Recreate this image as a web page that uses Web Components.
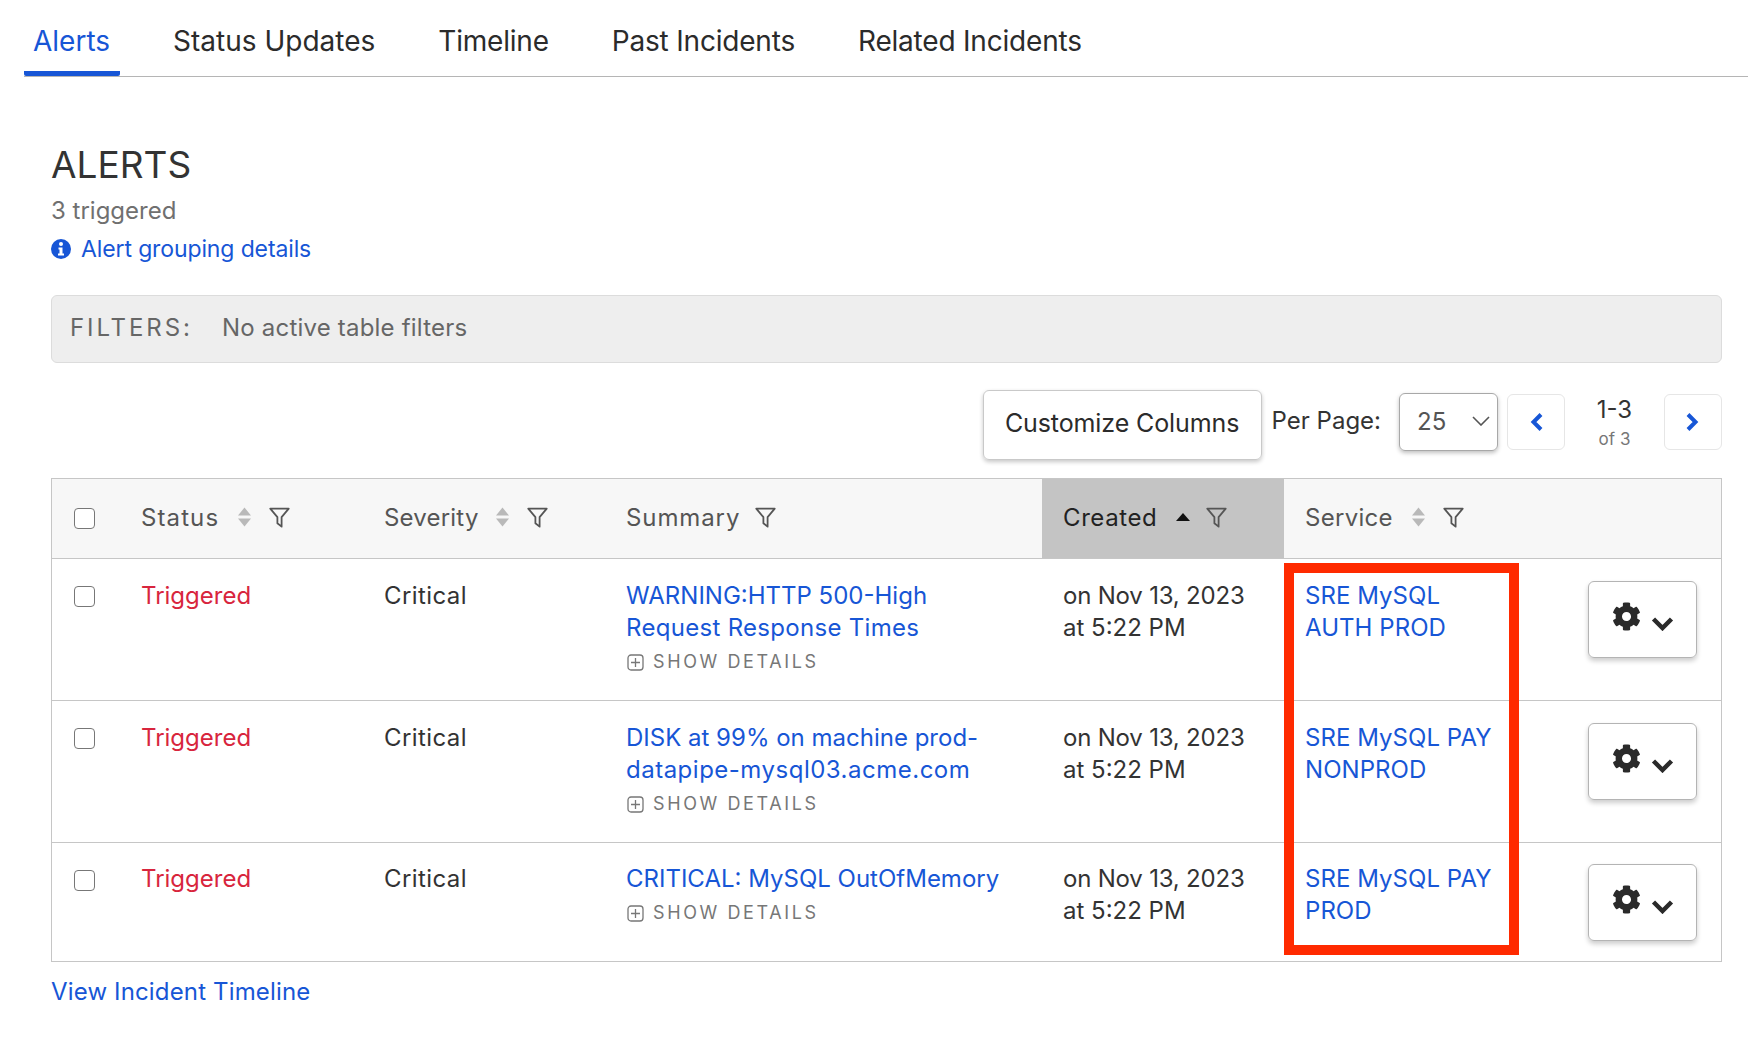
<!DOCTYPE html>
<html>
<head>
<meta charset="utf-8">
<title>Alerts</title>
<style>
  html, body { margin: 0; background: #fff; }
  body { font-family: Inter, "Noto Sans", sans-serif; color: #333; width: 1758px; height: 1038px; overflow: hidden; }
</style>
</head>
<body>
<incident-tabs></incident-tabs>
<alerts-panel></alerts-panel>

<script>
const BLUE = "#1756d6";
const FUNNEL = `<svg width="21" height="21" viewBox="0 0 20 20"><path d="M1.2 1.5h17.6l-6.8 8.2v9l-4-3.2v-5.800z" fill="none" stroke="currentColor" stroke-width="1.700" stroke-linejoin="round"/></svg>`;
const SORT = `<svg width="15" height="20" viewBox="0 0 15 20"><path d="M7.500 0.500l6.500 8h-13zM7.500 19.500l6.500-8h-13z" fill="#b9b9b9"/></svg>`;
const GEAR = `<svg width="29" height="29" viewBox="0 0 512 512"><path fill="#2a2a2a" d="M487.400 315.700l-42.600-24.600c4.300-23.200 4.300-47 0-70.200l42.600-24.600c4.900-2.800 7.100-8.600 5.500-14-11.100-35.600-30-67.800-54.700-94.600-3.800-4.100-10-5.100-14.800-2.300L380.800 110c-17.900-15.400-38.500-27.300-60.800-35.100V25.800c0-5.600-3.900-10.500-9.400-11.700-36.700-8.200-74.300-7.800-109.200 0-5.500 1.200-9.400 6.100-9.400 11.700V75c-22.200 7.900-42.800 19.800-60.800 35.100L88.700 85.500c-4.900-2.800-11-1.900-14.800 2.300-24.700 26.700-43.600 58.900-54.700 94.600-1.700 5.400.6 11.200 5.500 14L67.300 221c-4.300 23.200-4.300 47 0 70.200l-42.600 24.600c-4.900 2.800-7.100 8.600-5.500 14 11.100 35.600 30 67.800 54.700 94.600 3.800 4.100 10 5.100 14.800 2.300l42.600-24.600c17.900 15.400 38.500 27.300 60.800 35.100v49.200c0 5.600 3.900 10.500 9.400 11.700 36.700 8.200 74.300 7.800 109.200 0 5.500-1.200 9.400-6.100 9.400-11.700v-49.200c22.200-7.900 42.800-19.800 60.800-35.100l42.600 24.600c4.900 2.800 11 1.900 14.800-2.300 24.700-26.700 43.600-58.900 54.700-94.600 1.500-5.500-.7-11.300-5.600-14.100zM256 336c-44.100 0-80-35.900-80-80s35.900-80 80-80 80 35.900 80 80-35.900 80-80 80z"/></svg>`;

class IncidentTabs extends HTMLElement {
  constructor() {
    super();
    this.attachShadow({ mode: "open" });
    const tabs = ["Alerts", "Status Updates", "Timeline", "Past Incidents", "Related Incidents"];
    this.shadowRoot.innerHTML = `<style>
      :host { display: flex; gap: 43px; margin-left: 24px; width: 1724px; height: 77px; box-sizing: border-box; border-bottom: 1px solid #b5b5b5; font-size: 28px; letter-spacing: -.2px; color: #2b2b2b; }
      div { padding: 0 10px; height: 76px; line-height: 82px; box-sizing: border-box; white-space: nowrap; }
      div:nth-of-type(2) { letter-spacing: 0; }
      .on { padding-left: 9px; color: ${BLUE}; letter-spacing: 0; border-bottom: 5px solid ${BLUE}; border-radius: 0 0 2px 2px; }
    </style>` + tabs.map((t, i) => `<div class="${i === 0 ? "on" : ""}">${t}</div>`).join("");
  }
}

class FilterBar extends HTMLElement {
  constructor() {
    super();
    this.attachShadow({ mode: "open" });
    this.shadowRoot.innerHTML = `<style>
      :host { display: flex; align-items: center; height: 68px; box-sizing: border-box; padding-left: 18px; padding-bottom: 4px; background: #eeeeee; border: 1px solid #dcdcdc; border-radius: 6px; color: #666; font-size: 24px; }
      b { font-weight: 400; letter-spacing: 2.900px; width: 152px; }
      span { letter-spacing: .2px; }
    </style><b>FILTERS:</b><span>No active table filters</span>`;
  }
}

class TableToolbar extends HTMLElement {
  constructor() {
    super();
    this.attachShadow({ mode: "open" });
    this.shadowRoot.innerHTML = `<style>
      :host { display: flex; align-items: center; justify-content: flex-end; height: 70px; font-size: 24px; color: #333; }
      .cust { width: 279px; height: 70px; box-sizing: border-box; padding-bottom: 4px; border: 1px solid #c9c9c9; border-radius: 6px; box-shadow: 0 2px 4px rgba(0,0,0,.22); display: flex; align-items: center; justify-content: center; color: #2b2b2b; font-size: 25px; letter-spacing: -.1px; }
      .per { margin-left: 10px; margin-right: 18px; position: relative; top: -5px; }
      .sel { width: 99px; height: 58px; box-sizing: border-box; border: 1px solid #a8a8a8; border-radius: 6px; box-shadow: 0 2px 4px rgba(0,0,0,.25); display: flex; align-items: center; justify-content: space-between; padding: 0 7px 2px 17px; color: #555; position: relative; top: -3px; }
      .pg { width: 58px; height: 56px; box-sizing: border-box; border: 1px solid #e6e6e6; border-radius: 6px; display: flex; align-items: center; justify-content: center; position: relative; top: -3px; }
      .prev { margin-left: 9px; }
      .range { width: 99px; text-align: center; line-height: 1; position: relative; top: -2px; }
      .range small { display: block; font-size: 17px; color: #777; margin-top: 9px; }
    </style>
    <div class="cust">Customize Columns</div>
    <span class="per">Per Page:</span>
    <div class="sel"><span>25</span><svg width="18" height="10" viewBox="0 0 18 10"><path d="M1 1l8 8 8-8" fill="none" stroke="#555" stroke-width="1.600"/></svg></div>
    <div class="pg prev"><svg width="14" height="18" viewBox="0 0 14 18"><path d="M12 1.500L4.500 9l7.500 7.500" fill="none" stroke="${BLUE}" stroke-width="4"/></svg></div>
    <div class="range">1-3<small>of 3</small></div>
    <div class="pg"><svg width="14" height="18" viewBox="0 0 14 18"><path d="M2 1.500L9.500 9 2 16.500" fill="none" stroke="${BLUE}" stroke-width="4"/></svg></div>`;
  }
}

const COLUMNS = "69px 243px 242px 436px 242px 256px 1fr";

class TableHead extends HTMLElement {
  constructor() {
    super();
    this.attachShadow({ mode: "open" });
    this.shadowRoot.innerHTML = `<style>
      :host { display: grid; grid-template-columns: ${COLUMNS}; height: 79px; background: #f7f7f7; border-bottom: 1px solid #c6c6c6; font-size: 24px; color: #555; }
      .c { display: flex; align-items: center; padding-left: 20px; padding-bottom: 3px; }
      .c i { display: flex; font-style: normal; color: #555; letter-spacing: 0; }
      .s { margin-left: 18px; }
      .f { margin-left: 17px; }
      .box { width: 21px; height: 21px; box-sizing: border-box; border: 1.500px solid #777; border-radius: 4px; background: #fff; margin: 29px 0 0 22px; }
      .active { background: #c4c4c4; color: #222; padding-left: 21px; }
      .active .tri { margin-left: 19px; width: 0; height: 0; border: 7px solid transparent; border-top: 0; border-bottom: 8px solid #111; }
      .active .f { margin-left: 16px; }
      .svc { padding-left: 21px; }
    </style>
    <div><div class="box"></div></div>
    <div class="c" style="letter-spacing:1.100px">Status<i class="s">${SORT}</i><i class="f">${FUNNEL}</i></div>
    <div class="c" style="letter-spacing:.2px">Severity<i class="s" style="margin-left:16px">${SORT}</i><i class="f">${FUNNEL}</i></div>
    <div class="c" style="letter-spacing:.9px">Summary<i class="f" style="margin-left:15px">${FUNNEL}</i></div>
    <div class="c active" style="letter-spacing:.6px">Created<span class="tri"></span><i class="f">${FUNNEL}</i></div>
    <div class="c svc" style="letter-spacing:.3px">Service<i class="s">${SORT}</i><i class="f">${FUNNEL}</i></div>
    <div></div>`;
  }
}

class AlertRow extends HTMLElement {
  constructor() {
    super();
    this.attachShadow({ mode: "open" });
    const h = this.getAttribute("height");
    const pad = Number(this.getAttribute("pad") || 21);
    this.shadowRoot.innerHTML = `<style>
      :host { display: grid; grid-template-columns: ${COLUMNS}; height: ${h}px; box-sizing: border-box; border-bottom: 1px solid #c6c6c6; font-size: 24px; line-height: 32px; color: #333; }
      :host(:last-of-type) { border-bottom: 0; }
      .c { padding: ${pad}px 0 0 20px; }
      .box { width: 21px; height: 21px; box-sizing: border-box; border: 1.500px solid #777; border-radius: 4px; margin: 27px 0 0 22px; }
      .red { color: #d8253d; }
      .sev { letter-spacing: .4px; }
      .date { padding-left: 21px; }
      .date span { letter-spacing: -.2px; }
      a { color: ${BLUE}; text-decoration: none; display: block; }
      .more { display: flex; align-items: center; gap: 9px; margin-top: 2px; padding-left: 1px; font-size: 18px; line-height: 32px; letter-spacing: 2.600px; color: #777; }
      .svc { padding: ${pad}px 10px 0 21px; letter-spacing: .05px; }
      button { all: unset; display: flex; margin: ${pad + 1}px 0 0 48px; width: 109px; height: 77px; box-sizing: border-box; border: 1px solid #b4b4b4; border-radius: 6px; box-shadow: 0 3px 5px rgba(0,0,0,.2); padding: 20px 0 0 23px; gap: 10px; }
      button svg + svg { margin-top: 14px; }
    </style>
    <div><div class="box"></div></div>
    <div class="c red">Triggered</div>
    <div class="c sev">Critical</div>
    <div class="c"><a><slot name="summary"></slot></a>
      <div class="more"><svg width="17" height="17" viewBox="0 0 17 17"><rect x="1" y="1" width="15" height="15" rx="3" fill="none" stroke="#777" stroke-width="1.300"/><path d="M8.500 4v9M4 8.500h9" stroke="#777" stroke-width="1.300"/></svg>SHOW DETAILS</div>
    </div>
    <div class="c date"><span>on Nov 13, 2023</span><br>at 5:22 PM</div>
    <div class="svc"><a><slot name="service"></slot></a></div>
    <div><button>${GEAR}<svg width="23" height="15" viewBox="0 0 23 15"><path d="M2.500 3l9 9 9-9" fill="none" stroke="#2a2a2a" stroke-width="4.500"/></svg></button></div>`;
  }
}

class AlertsTable extends HTMLElement {
  constructor() {
    super();
    this.attachShadow({ mode: "open" });
    this.shadowRoot.innerHTML = `<style>
      :host { display: block; position: relative; border: 1px solid #c6c6c6; }
      .mark { position: absolute; left: 1232px; top: 84px; width: 235px; height: 392px; box-sizing: border-box; border: 10px solid #ff2a00; pointer-events: none; }
    </style><slot></slot><div class="mark"></div>`;
  }
}

class AlertsPanel extends HTMLElement {
  constructor() {
    super();
    this.attachShadow({ mode: "open" });
    this.shadowRoot.innerHTML = `<style>
      :host { display: block; margin: 0 36px 0 51px; padding-top: 65px; font-size: 24px; }
      h2 { margin: 0; font-size: 37px; font-weight: 400; line-height: 46px; color: #333; }
      .sub { color: #707070; line-height: 32px; margin-top: 7px; }
      .info { display: flex; align-items: center; gap: 10px; color: ${BLUE}; font-size: 23px; letter-spacing: -.12px; line-height: 32px; margin-top: 6px; }
      filter-bar { margin-top: 30px; }
      table-toolbar { margin-top: 27px; }
      alerts-table { margin-top: 18px; }
      .view { color: ${BLUE}; line-height: 32px; margin-top: 14px; letter-spacing: .15px; }
      .w1 { letter-spacing: .3px; }
      .w2 { letter-spacing: .5px; }
    </style>
    <h2>ALERTS</h2>
    <div class="sub">3 triggered</div>
    <div class="info"><svg width="20" height="20" viewBox="0 0 20 20"><circle cx="10" cy="10" r="10" fill="${BLUE}"/><circle cx="10" cy="5" r="2" fill="#fff"/><path d="M7.500 8.500h4v6h1.500v2h-6v-2h1.500v-4h-1z" fill="#fff"/></svg>Alert grouping details</div>
    <filter-bar></filter-bar>
    <table-toolbar></table-toolbar>
    <alerts-table>
      <table-head></table-head>
      <alert-row height="142"><span slot="summary">WARNING:HTTP 500-High<br><span class="w1">Request Response Times</span></span><span slot="service">SRE MySQL<br>AUTH PROD</span></alert-row>
      <alert-row height="142"><span slot="summary">DISK at 99% on machine prod-<br><span class="w2">datapipe-mysql03.acme.com</span></span><span slot="service">SRE MySQL PAY<br>NONPROD</span></alert-row>
      <alert-row height="118" pad="20"><span slot="summary">CRITICAL: MySQL OutOfMemory</span><span slot="service">SRE MySQL PAY<br>PROD</span></alert-row>
    </alerts-table>
    <div class="view">View Incident Timeline</div>`;
  }
}

customElements.define("incident-tabs", IncidentTabs);
customElements.define("filter-bar", FilterBar);
customElements.define("table-toolbar", TableToolbar);
customElements.define("table-head", TableHead);
customElements.define("alert-row", AlertRow);
customElements.define("alerts-table", AlertsTable);
customElements.define("alerts-panel", AlertsPanel);
</script>
</body>
</html>
